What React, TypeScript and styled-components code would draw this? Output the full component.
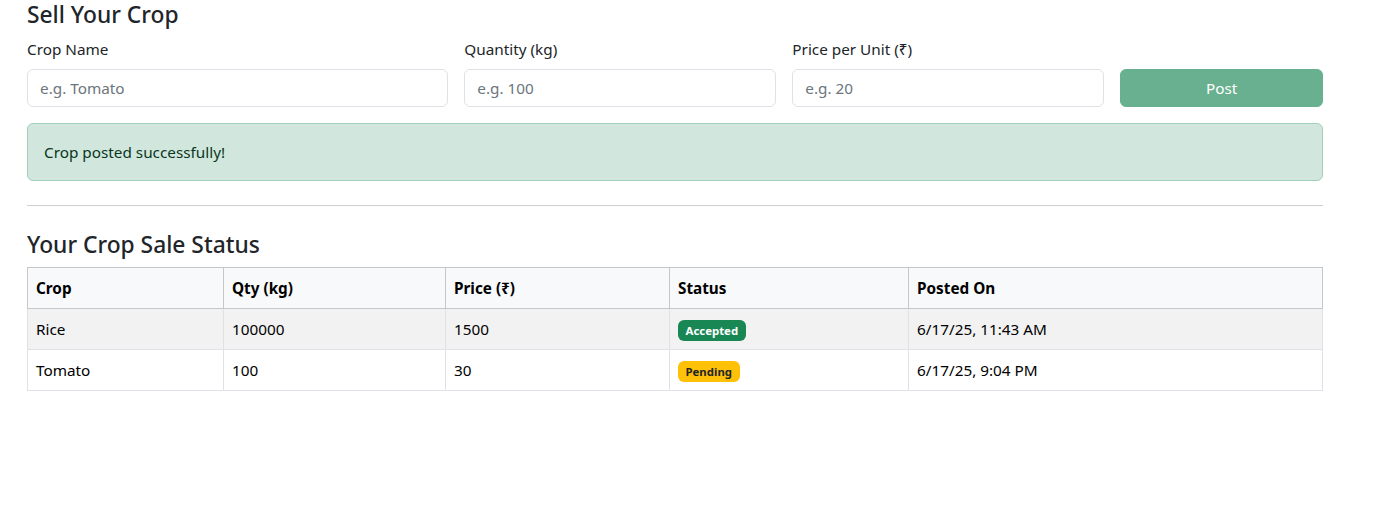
import React from "react";
import styled, { createGlobalStyle } from "styled-components";

const FONT = `"Noto Sans", "Open Sans", Arial, sans-serif`;

const Global = createGlobalStyle`
  *, *::before, *::after { box-sizing: border-box; }
  html, body { margin: 0; padding: 0; background: #fff; }
  body {
    font-family: ${FONT};
    font-size: 15.3px;
    line-height: 24px;
    color: #212529;
  }
`;

const Page = styled.div`
  width: 1296px;
  margin-left: 27px;
`;

const Heading = styled.h4`
  margin: 0 0 8px;
  padding-top: 2px;
  height: 28.8px;
  font-size: 22.8px;
  font-weight: 500;
  line-height: 26px;
  color: #212529;
`;

const FormRow = styled.div`
  display: grid;
  grid-template-columns: 421.33px 312px 312px 202.67px;
  column-gap: 16px;
  align-items: end;
`;

const Field = styled.div`
  display: flex;
  flex-direction: column;
`;

const Label = styled.label`
  margin-bottom: 8px;
  line-height: 24px;
`;

const Input = styled.input`
  height: 38px;
  padding: 6px 12px;
  font-family: ${FONT};
  font-size: 15.3px;
  line-height: 24px;
  color: #212529;
  background: #fff;
  border: 1px solid #dee2e6;
  border-radius: 6px;
  outline: none;
  &::placeholder { color: #6c757d; opacity: 1; }
`;

const Button = styled.button`
  height: 38px;
  padding: 6px 12px;
  font-family: ${FONT};
  font-size: 15.3px;
  line-height: 24px;
  color: #fff;
  background: #198754;
  border: 1px solid #198754;
  border-radius: 6px;
  opacity: 0.65;
`;

const Alert = styled.div`
  margin-top: 16px;
  padding: 16px;
  background: #d1e7dd;
  border: 1px solid #a3cfbb;
  border-radius: 6px;
  color: #0a3622;
  line-height: 24px;
`;

const Rule = styled.hr`
  margin: 24px 0;
  border: 0;
  border-top: 1px solid #cfcfcf;
`;

const Table = styled.table`
  width: 1295px;
  border-collapse: collapse;
  table-layout: fixed;
  line-height: 24px;
  color: #212529;
`;

const Col = styled.col<{ $w: number }>`
  width: ${(p) => p.$w}px;
`;

const Th = styled.th`
  text-align: left;
  font-weight: 700;
  padding: 8px;
  background: #f8f9fa;
  border: 1px solid #c6c7c8;
  color: #000;
`;

const Tr = styled.tr<{ $striped?: boolean }>`
  background: ${(p) => (p.$striped ? "#f2f2f2" : "#fff")};
`;

const Td = styled.td`
  padding: 8px;
  border: 1px solid #dee2e6;
  color: #000;
`;

const Badge = styled.span<{ $tone: "success" | "warning" }>`
  display: inline-block;
  padding: 4.5px 7.5px;
  font-size: 11.4px;
  font-weight: 700;
  line-height: 12px;
  border-radius: 6px;
  vertical-align: middle;
  color: ${(p) => (p.$tone === "success" ? "#fff" : "#212529")};
  background: ${(p) => (p.$tone === "success" ? "#198754" : "#ffc107")};
`;

const rows = [
  { crop: "Rice", qty: "100000", price: "1500", status: "Accepted", date: "6/17/25, 11:43 AM" },
  { crop: "Tomato", qty: "100", price: "30", status: "Pending", date: "6/17/25, 9:04 PM" },
];

export default function App() {
  return (
    <>
      <Global />
      <Page>
        <Heading>Sell Your Crop</Heading>
        <FormRow>
          <Field>
            <Label>Crop Name</Label>
            <Input placeholder="e.g. Tomato" />
          </Field>
          <Field>
            <Label>Quantity (kg)</Label>
            <Input placeholder="e.g. 100" />
          </Field>
          <Field>
            <Label>Price per Unit (₹)</Label>
            <Input placeholder="e.g. 20" />
          </Field>
          <Button disabled>Post</Button>
        </FormRow>
        <Alert>Crop posted successfully!</Alert>
        <Rule />
        <Heading>Your Crop Sale Status</Heading>
        <Table>
          <colgroup>
            <Col $w={196} />
            <Col $w={222} />
            <Col $w={224} />
            <Col $w={239} />
            <Col $w={414} />
          </colgroup>
          <thead>
            <tr>
              <Th>Crop</Th>
              <Th>Qty (kg)</Th>
              <Th>Price (₹)</Th>
              <Th>Status</Th>
              <Th>Posted On</Th>
            </tr>
          </thead>
          <tbody>
            {rows.map((r, i) => (
              <Tr key={r.crop} $striped={i === 0}>
                <Td>{r.crop}</Td>
                <Td>{r.qty}</Td>
                <Td>{r.price}</Td>
                <Td>
                  <Badge $tone={r.status === "Accepted" ? "success" : "warning"}>{r.status}</Badge>
                </Td>
                <Td>{r.date}</Td>
              </Tr>
            ))}
          </tbody>
        </Table>
      </Page>
    </>
  );
}
